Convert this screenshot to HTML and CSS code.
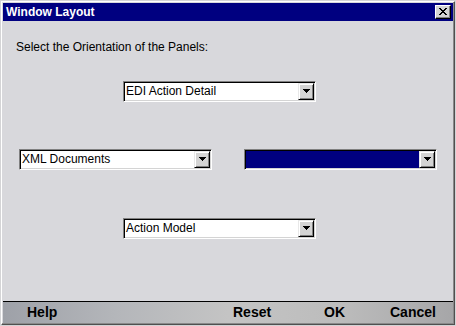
FILE: index.html
```html
<!DOCTYPE html>
<html>
<head>
<meta charset="utf-8">
<title>Window Layout</title>
<link rel="stylesheet" href="styles.css">
</head>
<body>
<div class="window">
  <div class="window-inner">
    <div class="titlebar">
      <span class="title">Window Layout</span>
      <span class="close-btn">
        <svg width="8" height="7" viewBox="0 0 8 7" shape-rendering="crispEdges">
          <path fill="#000" d="M0 0h2v1H0zM6 0h2v1H6zM1 1h2v1H1zM5 1h2v1H5zM2 2h4v1H2zM3 3h2v1H3zM2 4h4v1H2zM1 5h2v1H1zM5 5h2v1H5zM0 6h2v1H0zM6 6h2v1H6z"/>
        </svg>
      </span>
    </div>
    <div class="content">
      <div class="prompt">Select the Orientation of the Panels:</div>
      <div class="row row-top">
        <div class="combo">
          <span class="combo-text">EDI Action Detail</span>
          <span class="combo-btn"><svg width="7" height="4" viewBox="0 0 7 4" shape-rendering="crispEdges"><path fill="#000" d="M0 0h7v1H0zM1 1h5v1H1zM2 2h3v1H2zM3 3h1v1H3z"/></svg></span>
        </div>
      </div>
      <div class="row row-mid">
        <div class="combo">
          <span class="combo-text">XML Documents</span>
          <span class="combo-btn"><svg width="7" height="4" viewBox="0 0 7 4" shape-rendering="crispEdges"><path fill="#000" d="M0 0h7v1H0zM1 1h5v1H1zM2 2h3v1H2zM3 3h1v1H3z"/></svg></span>
        </div>
        <div class="combo combo-selected">
          <span class="combo-text"></span>
          <span class="combo-btn"><svg width="7" height="4" viewBox="0 0 7 4" shape-rendering="crispEdges"><path fill="#000" d="M0 0h7v1H0zM1 1h5v1H1zM2 2h3v1H2zM3 3h1v1H3z"/></svg></span>
        </div>
      </div>
      <div class="row row-bottom">
        <div class="combo">
          <span class="combo-text">Action Model</span>
          <span class="combo-btn"><svg width="7" height="4" viewBox="0 0 7 4" shape-rendering="crispEdges"><path fill="#000" d="M0 0h7v1H0zM1 1h5v1H1zM2 2h3v1H2zM3 3h1v1H3z"/></svg></span>
        </div>
      </div>
    </div>
    <div class="footer">
      <span class="fbtn fbtn-help">Help</span>
      <span class="fbtn fbtn-reset">Reset</span>
      <span class="fbtn fbtn-ok">OK</span>
      <span class="fbtn fbtn-cancel">Cancel</span>
    </div>
  </div>
</div>
</body>
</html>
```

FILE: styles.css
```css
html, body {
  margin: 0;
  padding: 0;
  background: #d8d8dc;
}

body {
  font-family: "Liberation Sans", Arial, sans-serif;
  font-size: 12px;
  color: #000;
}

.window {
  width: 456px;
  height: 326px;
  box-sizing: border-box;
  border: 1px solid #d4d4d6;
  background: #d8d8dc;
}

.window-inner {
  height: 100%;
  box-sizing: border-box;
  border-style: solid;
  border-width: 1px;
  border-color: #ffffff #505050 #505050 #ffffff;
  padding: 1px;
  box-shadow: inset -1px -1px #8a8a8a;
  display: flex;
  flex-direction: column;
}

.titlebar {
  height: 18px;
  background: #000080;
  display: flex;
  align-items: flex-start;
  padding-left: 3px;
  padding-right: 2px;
}

.title {
  flex: 1;
  color: #ffffff;
  font-weight: bold;
  font-size: 12px;
  line-height: 18px;
}

.close-btn {
  margin-top: 2px;
  width: 16px;
  height: 14px;
  box-sizing: border-box;
  background: #d4d4d4;
  border-style: solid;
  border-width: 1px;
  border-color: #ffffff #000000 #000000 #ffffff;
  box-shadow: inset -1px -1px #808080;
  display: flex;
  align-items: center;
  justify-content: center;
  padding: 0 1px 1px 0;
}

.close-btn svg {
  display: block;
}

.content {
  height: 280px;
  box-sizing: border-box;
  background: #d8d8dc;
  padding-top: 19px;
}

.prompt {
  padding-left: 13px;
  line-height: 14px;
  height: 14px;
}

.row {
  display: flex;
}

.row-top {
  margin-top: 27px;
  padding-left: 120px;
}

.row-mid {
  margin-top: 47px;
  padding-left: 16px;
  gap: 32px;
}

.row-bottom {
  margin-top: 48px;
  padding-left: 120px;
}

.combo {
  width: 193px;
  height: 21px;
  box-sizing: border-box;
  border-style: solid;
  border-width: 1px;
  border-color: #808080 #ffffff #ffffff #808080;
  box-shadow: inset 1px 1px #000000, inset -1px -1px #d4d4d4;
  padding: 1px;
  display: flex;
  background: #ffffff;
}

.combo-text {
  flex: 1;
  height: 17px;
  line-height: 17px;
  padding-left: 1px;
  background: #ffffff;
  white-space: nowrap;
  overflow: hidden;
}

.combo-selected .combo-text {
  background: #000080;
}

.combo-btn {
  width: 16px;
  height: 17px;
  box-sizing: border-box;
  background: #d4d4d4;
  border-style: solid;
  border-width: 1px;
  border-color: #e8e8e8 #000000 #000000 #e8e8e8;
  box-shadow: inset 1px 1px #ffffff, inset -1px -1px #808080;
  display: flex;
  align-items: center;
  justify-content: center;
  padding-bottom: 1px;
}

.combo-btn svg {
  display: block;
}

.footer {
  height: 22px;
  box-sizing: border-box;
  border-top: 1px solid #000000;
  background: linear-gradient(to right, #9ea1a8 0%, #b4b6ba 25%, #c4c4c4 50%, #bcbcbc 75%, #a6a6a8 100%);
  display: flex;
  padding-left: 24px;
}

.fbtn {
  font-weight: bold;
  font-size: 14px;
  line-height: 21px;
  white-space: nowrap;
}

.fbtn-help {
  width: 206px;
}

.fbtn-reset {
  width: 91px;
}

.fbtn-ok {
  width: 66px;
}
```
